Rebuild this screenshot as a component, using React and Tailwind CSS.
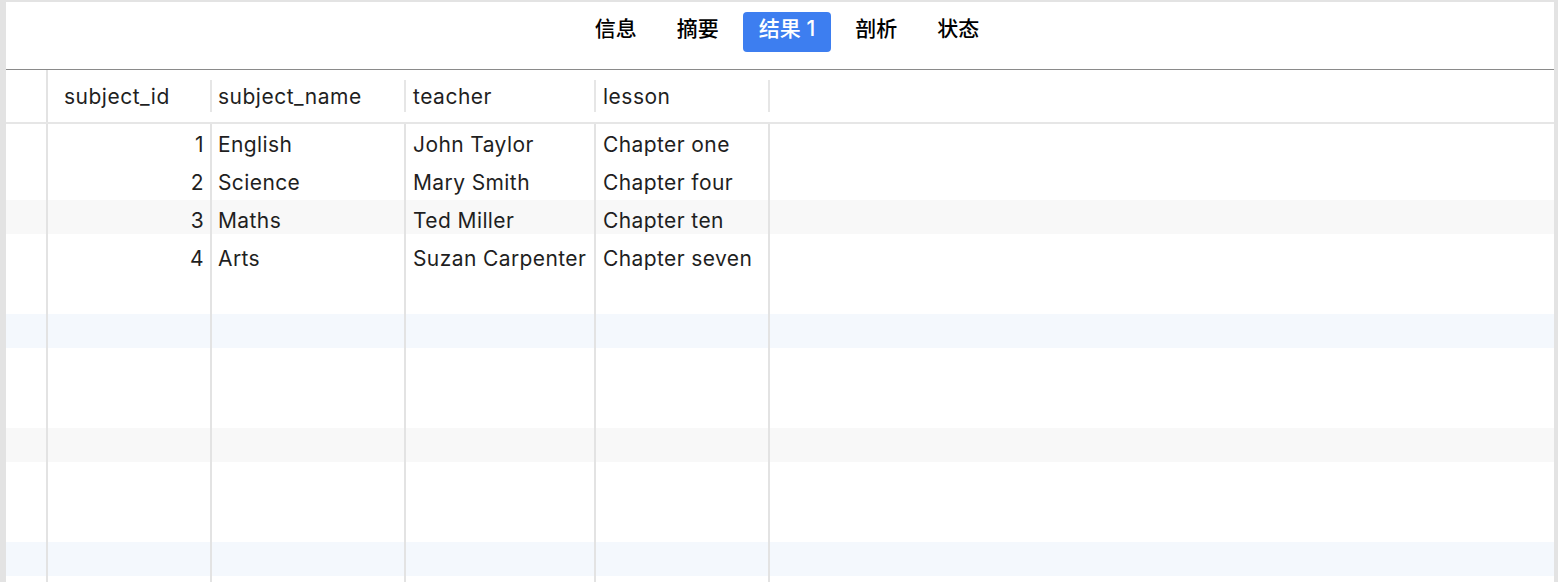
const tabs = [
  { label: '信息' },
  { label: '摘要' },
  { label: '结果 1', active: true },
  { label: '剖析' },
  { label: '状态' },
];

const rows = [
  { id: 1, name: 'English', teacher: 'John Taylor', lesson: 'Chapter one' },
  { id: 2, name: 'Science', teacher: 'Mary Smith', lesson: 'Chapter four' },
  { id: 3, name: 'Maths', teacher: 'Ted Miller', lesson: 'Chapter ten' },
  { id: 4, name: 'Arts', teacher: 'Suzan Carpenter', lesson: 'Chapter seven' },
];

// body bands: white gaps and alternating grey / blue stripes
const bands = [
  { h: 'h-[76px]', bg: 'bg-white' },
  { h: 'h-[34px]', bg: 'bg-[#f8f8f8]' },
  { h: 'h-[80px]', bg: 'bg-white' },
  { h: 'h-[34px]', bg: 'bg-[#f4f8fd]' },
  { h: 'h-[80px]', bg: 'bg-white' },
  { h: 'h-[34px]', bg: 'bg-[#f8f8f8]' },
  { h: 'h-[80px]', bg: 'bg-white' },
  { h: 'h-[34px]', bg: 'bg-[#f4f8fd]' },
  { h: 'flex-1', bg: 'bg-white' },
];

const font = { fontFamily: 'Inter, "Noto Sans CJK SC", sans-serif' };

const App = () => {
  return (
    <div
      className="h-[582px] w-[1558px] overflow-hidden bg-[#e3e3e3] pt-[2px] pl-[6px] pr-[4px] text-[#1f1f1f]"
      style={font}
    >
      <div className="flex h-full flex-col bg-white">
        {/* Tab bar */}
        <div className="flex h-[68px] justify-center gap-2 pl-[14px] pt-[10px] border-b border-[#8a8a8a]">
          {tabs.map((tab) => (
            <div
              key={tab.label}
              className={`flex h-[40px] items-center rounded-[4px] px-4 pb-[7px] text-[21px] font-medium ${
                tab.active ? 'bg-[#3d7ef0] text-white' : 'text-black'
              }`}
            >
              {tab.label}
            </div>
          ))}
        </div>

        {/* Header row */}
        <div className="flex h-[54px] border-b-2 border-[#e6e6e6] text-[21px] tracking-[0.5px]">
          <div className="w-[42px] border-r-2 border-[#e3e3e3]" />
          <div className="flex w-[162px] items-center pl-[16px] pt-[1px]">subject_id</div>
          <div className="my-[10px] w-[2px] bg-[#e6e6e6]" />
          <div className="flex w-[192px] items-center pl-[6px] pt-[1px]">subject_name</div>
          <div className="my-[10px] w-[2px] bg-[#e6e6e6]" />
          <div className="flex w-[188px] items-center pl-[7px] pt-[1px]">teacher</div>
          <div className="my-[10px] w-[2px] bg-[#e6e6e6]" />
          <div className="flex w-[172px] items-center pl-[7px] pt-[1px]">lesson</div>
          <div className="my-[10px] w-[2px] bg-[#e6e6e6]" />
        </div>

        {/* Body */}
        <div className="grid flex-1">
          <div className="col-start-1 row-start-1 flex flex-col">
            {bands.map((b, i) => (
              <div key={i} className={`${b.h} ${b.bg}`} />
            ))}
          </div>
          <div className="col-start-1 row-start-1 flex text-[21px] tracking-[0.4px]">
            <div className="w-[42px] border-r-2 border-[#e3e3e3]" />
            <div className="w-[164px] border-r-2 border-[#e3e3e3] pt-[2px] pr-[6px] text-right">
              {rows.map((r) => (
                <div key={r.id} className="flex h-[38px] items-center justify-end">{r.id}</div>
              ))}
            </div>
            <div className="w-[194px] border-r-2 border-[#e3e3e3] pt-[2px] pl-[6px]">
              {rows.map((r) => (
                <div key={r.id} className="flex h-[38px] items-center">{r.name}</div>
              ))}
            </div>
            <div className="w-[190px] border-r-2 border-[#e3e3e3] pt-[2px] pl-[7px]">
              {rows.map((r) => (
                <div key={r.id} className="flex h-[38px] items-center whitespace-nowrap">{r.teacher}</div>
              ))}
            </div>
            <div className="w-[174px] border-r-2 border-[#e3e3e3] pt-[2px] pl-[7px]">
              {rows.map((r) => (
                <div key={r.id} className="flex h-[38px] items-center whitespace-nowrap">{r.lesson}</div>
              ))}
            </div>
          </div>
        </div>
      </div>
    </div>
  );
};

export default App;
